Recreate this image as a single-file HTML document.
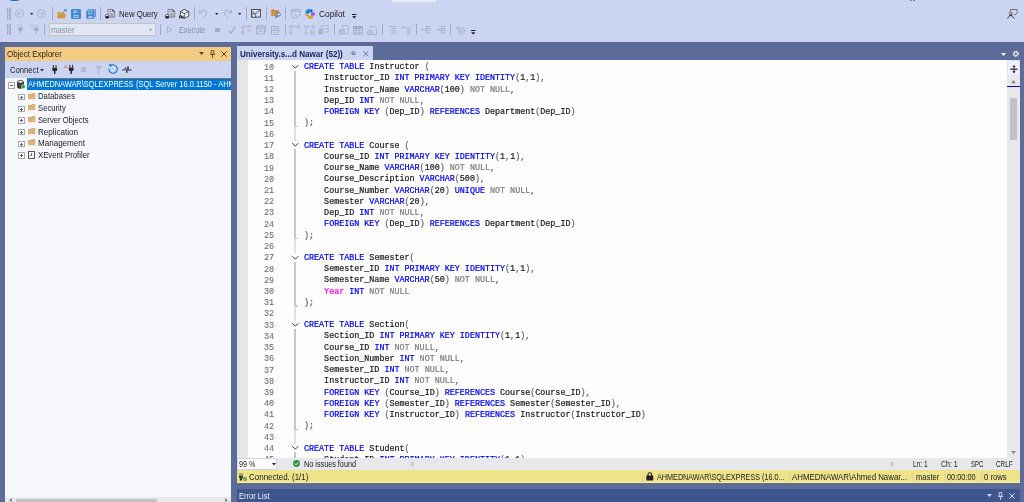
<!DOCTYPE html>
<html>
<head>
<meta charset="utf-8">
<title>SSMS</title>
<style>
*{box-sizing:border-box;margin:0;padding:0}
html,body{width:1024px;height:502px;overflow:hidden}
body{background:#5d6b99;font-family:"Liberation Sans",sans-serif;font-size:9px;color:#1e1e1e;position:relative}
#root{position:absolute;left:0;top:0;width:1024px;height:502px;will-change:transform;opacity:0.9999}
.abs{position:absolute}
#topbar{left:0;top:0;width:1024px;height:42px;background:#ccd5f0}
svg{position:absolute;overflow:visible}
/* object explorer */
#oe{left:5px;top:47px;width:226.4px;height:455px;background:#f7f9fe}
.plus{position:absolute;width:6.6px;height:6.6px;border:0.8px solid #a9a9a9;background:#fff}
.plus:before{content:"";position:absolute;left:1px;top:2.1px;width:3px;height:0.8px;background:#5a6275}
.plus.p:after{content:"";position:absolute;left:2.1px;top:1px;width:0.8px;height:3px;background:#5a6275}
/* editor */
#tab{left:236.7px;top:46.4px;width:136.7px;height:13.7px;background:#ccd5f0}
#ed{left:237px;top:60px;width:783px;height:398px;background:#fff;overflow:hidden}
#margin{left:0;top:0;width:10.8px;height:398px;background:#e6e7e8}
.ln,.code{position:absolute;font-family:"Liberation Mono",monospace;font-size:8.4px;line-height:11.2px;white-space:pre}
.ln{color:#737373;-webkit-text-stroke:0.12px;margin-top:0.4px;left:0;width:37px;text-align:right}
.code{left:67px;color:#1e1e1e;-webkit-text-stroke:0.22px}
.k{color:#0000ff}.g{color:#808080}.p{color:#6a6a6a}.m{color:#ff00ff}
#edbot{left:237px;top:458px;width:783px;height:12px;background:#e8e8ec}
#status{left:237px;top:470px;width:783px;height:13.2px;background:#f0e489;border-bottom:1px solid #faf093}
#err{left:237px;top:489px;width:783px;height:13px;background:#40568d}
.t{position:absolute;white-space:pre;line-height:12px;transform-origin:0 0}
</style>
</head>
<body>
<div id="root">
<div id="topbar" class="abs"></div>
<div class="abs" style="left:9.8px;top:0;width:9px;height:1.2px;background:linear-gradient(90deg,#2f8fe6,#0a62d6 50%,#2f8fe6);border-radius:0 0 2px 2px"></div><div class="abs" style="left:9.8px;top:1.2px;width:9px;height:0.8px;background:#dbe3f7"></div>
<div class="abs" style="left:392px;top:0;width:44.4px;height:2.3px;background:#e9edfb"></div>
<div class="abs" style="left:909.8px;top:0;width:2px;height:0.9px;background:#7c8296"></div><div class="abs" style="left:913.2px;top:0;width:2px;height:0.9px;background:#7c8296"></div>
<div class="abs" style="left:6.9px;top:7.7px;width:4.4px;height:12.1px;background-image:radial-gradient(circle at 0.7px 0.7px,#8f9cc2 0.6px,transparent 0.9px),radial-gradient(circle at 2.2px 2px,#8f9cc2 0.6px,transparent 0.9px);background-size:3px 2.6px"></div>
<svg style="left:15.2px;top:8.6px" width="9" height="9"><circle cx="4.5" cy="4.5" r="4" fill="none" stroke="#a4acc6" stroke-width="0.8"/><path d="M6.6 4.5H2.6M4.3 2.7L2.5 4.5L4.3 6.3" fill="none" stroke="#a4acc6" stroke-width="0.8"/></svg>
<svg style="left:29.6px;top:12.5px" width="3.4" height="2.2"><path d="M0 0H3.4L1.70 2Z" fill="#2b2b2b"/></svg>
<svg style="left:37.2px;top:8.6px" width="9" height="9"><circle cx="4.5" cy="4.5" r="4" fill="none" stroke="#a4acc6" stroke-width="0.8"/><path d="M2.4 4.5H6.4M4.7 2.7L6.5 4.5L4.7 6.3" fill="none" stroke="#a4acc6" stroke-width="0.8"/></svg>
<div class="abs" style="left:52.0px;top:7.3px;width:1px;height:12.3px;background:#9dabd2"></div>
<svg style="left:57px;top:8.6px" width="10" height="10"><path d="M0.3 3H3.2L4 4H7.6V9.3H0.3Z" fill="#d8a24a"/><path d="M1.6 5.6H9.4L7.6 9.3H0.3Z" fill="#cf9738"/><path d="M5.5 4L8.6 0.9" stroke="#2e6fc2" stroke-width="1"/><path d="M7 0.3H9.4V2.7Z" fill="#2e6fc2"/></svg>
<svg style="left:71.2px;top:8.8px" width="10" height="10"><rect x="0" y="0" width="10" height="10" rx="1.3" fill="#3f87cd"/><rect x="2.3" y="1" width="5" height="3.3" fill="#8fbbe6"/><rect x="5.6" y="1.3" width="1.2" height="2.4" fill="#3f87cd"/><rect x="2.4" y="6" width="5.2" height="3" fill="#9fc6ea"/><rect x="3" y="7.2" width="4" height="0.8" fill="#3f87cd"/></svg>
<svg style="left:85.9px;top:8.8px" width="10" height="10"><rect x="1.6" y="0" width="8.4" height="8.4" rx="1.2" fill="#5b9bd8"/><rect x="0" y="1.4" width="8.6" height="8.6" rx="1.2" fill="#3f87cd" stroke="#ccd5f0" stroke-width="0.5"/><rect x="2.2" y="2.3" width="4.2" height="3" fill="#9fc6ea"/><rect x="3.3" y="2.3" width="2" height="2.1" fill="#3f87cd"/><rect x="2.2" y="6.8" width="4.4" height="2.4" fill="#9fc6ea"/></svg>
<div class="abs" style="left:100.0px;top:7.3px;width:1px;height:12.3px;background:#9dabd2"></div>
<svg style="left:105.4px;top:8.9px" width="10" height="10"><path d="M3 0.4H7.6L9.7 2.5V8.1H3Z" fill="#d9dce6" stroke="#6c6c6c" stroke-width="0.8"/><path d="M7.3 0.2L9.9 2.8L7.6 2.6Z" fill="#1e1e1e"/><path d="M4.6 2.4H6.4" stroke="#5a5f6e" stroke-width="0.7"/><rect x="4.4" y="3.6" width="4.4" height="3.8" fill="#b4b8c4"/><path d="M4.4 7.2H8.8" stroke="#7a7e8a" stroke-width="0.7"/><rect x="6.3" y="4.6" width="1" height="0.9" fill="#3b6fd0"/><path d="M0.3 6.6V8.6C0.3 9.9 3.9 9.9 3.9 8.6V6.6Z" fill="#161616"/><ellipse cx="2.1" cy="6.4" rx="1.8" ry="0.95" fill="#f6f6f6" stroke="#161616" stroke-width="0.5"/></svg>
<div class="t" style="left:119.00px;top:7.78px;font-size:9px;color:#1e1e1e;transform:scaleX(0.8608);">New Query</div>
<svg style="left:164.9px;top:8.9px" width="10" height="10"><path d="M3 0.4H7.6L9.7 2.5V8.1H3Z" fill="#d9dce6" stroke="#6c6c6c" stroke-width="0.8"/><path d="M7.3 0.2L9.9 2.8L7.6 2.6Z" fill="#1e1e1e"/><path d="M4.6 2.4H6.4" stroke="#5a5f6e" stroke-width="0.7"/><rect x="4.4" y="3.6" width="4.4" height="3.8" fill="#b4b8c4"/><path d="M4.4 7.2H8.8" stroke="#7a7e8a" stroke-width="0.7"/><rect x="6.3" y="4.6" width="1" height="0.9" fill="#3b6fd0"/><path d="M0.3 6.6V8.6C0.3 9.9 3.9 9.9 3.9 8.6V6.6Z" fill="#161616"/><ellipse cx="2.1" cy="6.4" rx="1.8" ry="0.95" fill="#f6f6f6" stroke="#161616" stroke-width="0.5"/></svg>
<svg style="left:178.9px;top:8.7px" width="10.2" height="9.6"><path d="M5.4 0.4L9.8 2.6V7.2L5.4 9.3L1.4 7.4V2.6Z" fill="#eef1fa" stroke="#2a2a2a" stroke-width="0.8"/><path d="M1.4 2.6L5.4 4.6L9.8 2.6M5.4 4.6V9.3" fill="none" stroke="#2a2a2a" stroke-width="0.7"/><path d="M0.7 6.6V9.4M2.3 6.6V9.4M3.9 6.6V9.4" stroke="#1c1c1c" stroke-width="1"/></svg>
<div class="abs" style="left:194.0px;top:7.3px;width:1px;height:12.3px;background:#9dabd2"></div>
<svg style="left:199.4px;top:8.8px" width="9" height="9"><path d="M0.6 0.8V3.8H3.8" fill="none" stroke="#a4acc6" stroke-width="0.9"/><path d="M0.8 3.6Q3.6 0.2 6.6 1.4Q9.2 3.2 6.8 6L3.8 8.8" fill="none" stroke="#a4acc6" stroke-width="0.9"/></svg>
<svg style="left:214.8px;top:12.5px" width="3.4" height="2.2"><path d="M0 0H3.4L1.70 2Z" fill="#2b2b2b"/></svg>
<svg style="left:222.6px;top:8.8px" width="9" height="9"><path d="M8.4 0.8V3.8H5.2" fill="none" stroke="#a4acc6" stroke-width="0.9"/><path d="M8.2 3.6Q5.4 0.2 2.4 1.4Q-0.2 3.2 2.2 6L5.2 8.8" fill="none" stroke="#a4acc6" stroke-width="0.9"/></svg>
<svg style="left:238.2px;top:12.5px" width="3.4" height="2.2"><path d="M0 0H3.4L1.70 2Z" fill="#2b2b2b"/></svg>
<div class="abs" style="left:246.0px;top:7.3px;width:1px;height:12.3px;background:#9dabd2"></div>
<svg style="left:251.2px;top:9.1px" width="10" height="9.6"><rect x="0.5" y="0.5" width="9" height="7.6" fill="#d6dcf2" stroke="#46423e" stroke-width="0.9"/><path d="M1 2.6L4.4 4.8L9.2 1" fill="none" stroke="#46423e" stroke-width="0.8"/><circle cx="2.8" cy="6.6" r="2" fill="#d6dcf2" stroke="#46423e" stroke-width="0.8"/></svg>
<div class="abs" style="left:266.0px;top:7.3px;width:1px;height:12.3px;background:#9dabd2"></div>
<svg style="left:271px;top:9.4px" width="10.4" height="9.4"><path d="M0.2 0.3H3L3.8 1.2H7.8V7.2H0.2Z" fill="#c9973e"/><path d="M0.2 1.9H7.8" stroke="#a87a28" stroke-width="0.6"/><circle cx="7.6" cy="5.4" r="1.7" fill="#e8effa" stroke="#2a6ec2" stroke-width="1"/><path d="M6.3 6.8L4.6 8.8" stroke="#2a6ec2" stroke-width="1.1"/></svg>
<div class="abs" style="left:285.0px;top:7.3px;width:1px;height:12.3px;background:#9dabd2"></div>
<svg style="left:290.6px;top:9.3px" width="9.6" height="9.4"><path d="M0.5 6.5V0.5H9.1V6.8H7.2" fill="none" stroke="#a4acc6" stroke-width="0.9"/><path d="M0.5 2.4H9.1" stroke="#a4acc6" stroke-width="0.8"/><path d="M1.6 7.2L3.8 5.2L6 7.2V9H1.6Z" fill="none" stroke="#a4acc6" stroke-width="0.8"/></svg>
<svg style="left:304.8px;top:8.8px" width="10.2" height="10"><path d="M0.6 4.2Q0.4 0.4 3.4 0.3H5.6Q7.4 0.4 7.6 2.2L7.2 3.8H4.4L3.6 4.4H0.6Z" fill="#1f80d9"/><circle cx="6.7" cy="1.6" r="0.8" fill="#1030c0"/><path d="M0.5 4.2H4L3.8 5H0.4Z" fill="#4aa86a"/><path d="M0.4 4.9H3.9L3.5 7.2Q2.6 7.6 1.4 7.2Q0.2 6.6 0.4 4.9Z" fill="#d9a63c"/><path d="M2.6 7.2L3.4 6.2H8.6L8.2 8.2Q7.6 9.9 5.8 9.9H4.4Q2.8 9.7 2.6 7.2Z" fill="#dca233"/><path d="M6 3.4H9Q10.2 3.6 10 5L9.6 6.4H6.6L5.6 5.4Z" fill="#8b5cf0"/><circle cx="7.6" cy="5.8" r="0.9" fill="#f044e0"/><path d="M4.6 4L6 3.6L5.4 6L4.2 6.4Z" fill="#eef4ff"/></svg>
<div class="t" style="left:318.60px;top:7.78px;font-size:9px;color:#1e1e1e;transform:scaleX(0.9245);">Copilot</div>
<svg style="left:352.4px;top:14.2px" width="4.4" height="4.8"><path d="M0 0.5H4.4" stroke="#1e1e1e" stroke-width="1"/><path d="M0 2.3H4.4L2.2 4.6Z" fill="#1e1e1e"/></svg>
<svg style="left:1006.6px;top:9px" width="10.8" height="10"><path d="M3.2 2.6V0.5H10.2V3.8L8.6 5.6H7" fill="none" stroke="#6a6a6a" stroke-width="0.9"/><circle cx="3.8" cy="4.4" r="1.4" fill="#eef1fa" stroke="#3a3a3a" stroke-width="0.8"/><path d="M0.4 9.6L3.8 5.6L7.2 9.6" fill="none" stroke="#2e2e2e" stroke-width="0.9"/><path d="M2.6 6.2H5" stroke="#1e1e1e" stroke-width="1"/></svg>
<div class="abs" style="left:6.9px;top:23.9px;width:4.4px;height:10.9px;background-image:radial-gradient(circle at 0.7px 0.7px,#8f9cc2 0.6px,transparent 0.9px),radial-gradient(circle at 2.2px 2px,#8f9cc2 0.6px,transparent 0.9px);background-size:3px 2.6px"></div>
<svg style="left:17.5px;top:25.3px" width="4.8" height="8.8" viewBox="0 0 5.2 9"><path d="M1.3 0V2.8M3.9 0V2.8" stroke="#a4acc6" stroke-width="0.8"/><path d="M0.1 2.8H5.1V4.6Q5.1 6 3.1 6V9H2.1V6Q0.1 6 0.1 4.6Z" fill="#a4acc6"/></svg>
<svg style="left:29.8px;top:25.1px" width="8.6" height="9" viewBox="0 0 9 9.4"><path d="M0.4 0.4L3 2.6M3 0.4L0.4 2.6" stroke="#a4acc6" stroke-width="0.7"/><path d="M5.1 0.6V3.2M7.7 0.6V3.2" stroke="#a4acc6" stroke-width="0.9"/><path d="M3.9 3.2H8.9V5Q8.9 6.4 6.9 6.4V9.4H5.9V6.4Q3.9 6.4 3.9 5Z" fill="#a4acc6"/></svg>
<div class="abs" style="left:44.0px;top:24.0px;width:1px;height:11.3px;background:#9dabd2"></div>
<div class="abs" style="left:49px;top:23px;width:107px;height:13.3px;background:#e1e7f6;border:1px solid #c9c5bd"></div>
<div class="t" style="left:51.00px;top:23.63px;font-size:9px;color:#8b91a6;transform:scaleX(0.8577);">master</div>
<svg style="left:149.4px;top:29.4px" width="3.0" height="2.2"><path d="M0 0H3.0L1.50 2Z" fill="#8b91a6"/></svg>
<div class="abs" style="left:160.0px;top:24.0px;width:1px;height:11.3px;background:#9dabd2"></div>
<svg style="left:167.2px;top:26.4px" width="5.4" height="7.2"><path d="M0.5 0.6L4.8 3.6L0.5 6.6Z" fill="none" stroke="#a4acc6" stroke-width="0.8"/></svg>
<div class="t" style="left:179.00px;top:23.63px;font-size:9px;color:#8b91a6;transform:scaleX(0.8115);">Execute</div>
<div class="abs" style="left:215.3px;top:27.5px;width:4.6px;height:4.6px;background:#a4acc6"></div>
<svg style="left:228px;top:25.8px" width="8" height="8"><path d="M0.5 4.6L2.8 7.4L7.4 0.5" fill="none" stroke="#a4acc6" stroke-width="1.1"/></svg>
<svg style="left:240.8px;top:25.2px" width="10.4" height="9.6"><rect x="0.6" y="0.5" width="2.6" height="2.4" rx="0.7" fill="none" stroke="#a4acc6" stroke-width="0.7"/><rect x="7" y="0.5" width="2.6" height="2.4" rx="0.7" fill="none" stroke="#a4acc6" stroke-width="0.7"/><path d="M3.2 1.7H7M1.9 2.9V6.4" stroke="#a4acc6" stroke-width="0.7"/><circle cx="1.9" cy="7.8" r="1.3" fill="none" stroke="#a4acc6" stroke-width="0.7"/><path d="M6.4 5L8.2 6.8L10 5Z" fill="none" stroke="#a4acc6" stroke-width="0.6"/></svg>
<svg style="left:255.6px;top:25.3px" width="10" height="9.4"><path d="M1.8 1.8V0.5H9.5V6.8H8.3" fill="none" stroke="#a4acc6" stroke-width="0.8"/><rect x="0.5" y="2" width="7.8" height="6.8" fill="none" stroke="#a4acc6" stroke-width="0.8"/><path d="M0.5 3.8H8.3M2 6.2H6.8" stroke="#a4acc6" stroke-width="0.8"/></svg>
<svg style="left:271px;top:25.6px" width="7.8" height="9"><rect x="0.5" y="0.5" width="6.8" height="8" fill="none" stroke="#a4acc6" stroke-width="0.8"/><path d="M0.5 4.3H7.3M2.6 2.4H5.2M2.6 6.4H5.2" stroke="#a4acc6" stroke-width="0.8"/></svg>
<div class="abs" style="left:285.0px;top:24.0px;width:1px;height:11.3px;background:#9dabd2"></div>
<svg style="left:289.3px;top:24.8px" width="11.4" height="10"><rect x="0.6" y="0.5" width="2.4" height="2.2" rx="0.6" fill="none" stroke="#a4acc6" stroke-width="0.7"/><rect x="8.2" y="0.5" width="2.4" height="2.2" rx="0.6" fill="none" stroke="#a4acc6" stroke-width="0.7"/><path d="M3.6 1.6H7.6M5 0.6L4 1.6L5 2.6M1.8 3.4V6.6" stroke="#a4acc6" stroke-width="0.6" fill="none"/><circle cx="1.8" cy="8.2" r="1.3" fill="none" stroke="#a4acc6" stroke-width="0.7"/></svg>
<svg style="left:303.6px;top:24.8px" width="11.4" height="10"><rect x="0.6" y="0.5" width="2.4" height="2.2" rx="0.6" fill="none" stroke="#a4acc6" stroke-width="0.7"/><rect x="8.2" y="0.5" width="2.4" height="2.2" rx="0.6" fill="none" stroke="#a4acc6" stroke-width="0.7"/><path d="M3.6 1.6H7.6M5 0.6L4 1.6L5 2.6M1.8 3.4V6.6" stroke="#a4acc6" stroke-width="0.6" fill="none"/><circle cx="1.8" cy="8.2" r="1.3" fill="none" stroke="#a4acc6" stroke-width="0.7"/><circle cx="8.4" cy="7.4" r="2.2" fill="none" stroke="#a4acc6" stroke-width="0.8"/><path d="M7.3 7.5L8.1 8.4L9.6 6.6" stroke="#a4acc6" stroke-width="0.7" fill="none"/></svg>
<svg style="left:318.2px;top:25.2px" width="10.6" height="9.6"><path d="M3.4 3V0.5H10.1V7H6.4" fill="none" stroke="#a4acc6" stroke-width="0.8"/><path d="M6 2.6V4.4M8 2.6V4.4" stroke="#a4acc6" stroke-width="0.7"/><rect x="0.5" y="3.6" width="4.4" height="5.6" rx="0.8" fill="#a4acc6"/><path d="M1.9 4.6V8.4M3.4 4.6V8.4" stroke="#ccd5f0" stroke-width="0.5"/></svg>
<div class="abs" style="left:334.0px;top:24.0px;width:1px;height:11.3px;background:#9dabd2"></div>
<svg style="left:338.6px;top:25.4px" width="9.6" height="9.4"><path d="M3.6 3.4V0.5H9.1V8.9H5.6" fill="none" stroke="#a4acc6" stroke-width="0.8"/><rect x="0.5" y="4.4" width="4.6" height="4.5" fill="none" stroke="#a4acc6" stroke-width="0.8"/><path d="M0.5 6.6H5.1M2.8 4.4V8.9" stroke="#a4acc6" stroke-width="0.6"/></svg>
<svg style="left:353px;top:25.8px" width="9.8" height="8.8"><rect x="0.4" y="0.4" width="9" height="8" fill="none" stroke="#a4acc6" stroke-width="0.8"/><path d="M0.4 2.6H9.4M0.4 4.6H9.4M0.4 6.6H9.4M3.4 0.4V8.4M6.4 0.4V8.4" stroke="#a4acc6" stroke-width="0.7"/><rect x="0.4" y="0.4" width="9" height="2.2" fill="#a4acc6"/></svg>
<svg style="left:367.4px;top:25.6px" width="10.2" height="9"><path d="M3.4 3.6V0.5H7.4L9.7 2.8V8.5H5.4" fill="none" stroke="#a4acc6" stroke-width="0.8"/><rect x="0.5" y="4.6" width="4.6" height="4" rx="0.6" fill="none" stroke="#a4acc6" stroke-width="0.8"/><path d="M0.5 6.6H5.1M2.8 4.6V8.6" stroke="#a4acc6" stroke-width="0.6"/></svg>
<div class="abs" style="left:382.0px;top:24.0px;width:1px;height:11.3px;background:#9dabd2"></div>
<svg style="left:387.6px;top:26.2px" width="8.6" height="8"><path d="M0.4 0.5H8.4M3 2.7H8.4M3 4.9H8.4M3 7.1H8.4" stroke="#a4acc6" stroke-width="0.8"/></svg>
<svg style="left:401px;top:25.2px" width="10" height="9.2"><path d="M0.6 0.6V3H3M0.8 2.8Q2.4 0.4 4.6 2.2" fill="none" stroke="#a4acc6" stroke-width="0.7"/><path d="M4 3H9.8M6 5H9.8M6 7H9.8M6 9H9.8" stroke="#a4acc6" stroke-width="0.8"/></svg>
<div class="abs" style="left:416.0px;top:24.0px;width:1px;height:11.3px;background:#9dabd2"></div>
<svg style="left:421.2px;top:26.4px" width="10" height="7.4"><path d="M0.3 3.6H4M1.8 2L0.3 3.6L1.8 5.2" fill="none" stroke="#a4acc6" stroke-width="0.7"/><path d="M5.2 0.5H9.8M5.2 2.6H9.8M5.2 4.7H9.8M5.2 6.8H9.8M5.4 0.5V6.8" stroke="#a4acc6" stroke-width="0.8"/></svg>
<svg style="left:436px;top:26.4px" width="10" height="7.4"><path d="M0.3 3.6H4M2.5 2L4 3.6L2.5 5.2" fill="none" stroke="#a4acc6" stroke-width="0.7"/><path d="M5.2 0.5H9.8M5.2 2.6H9.8M5.2 4.7H9.8M5.2 6.8H9.8M5.4 0.5V6.8" stroke="#a4acc6" stroke-width="0.8"/></svg>
<div class="abs" style="left:450.0px;top:24.0px;width:1px;height:11.3px;background:#9dabd2"></div>
<svg style="left:455.2px;top:25.8px" width="10" height="8.6"><path d="M0.3 2H3.4M2 0.6L3.5 2L2 3.4" fill="none" stroke="#a4acc6" stroke-width="0.7"/><circle cx="6.4" cy="5" r="3.2" fill="none" stroke="#a4acc6" stroke-width="0.8"/><circle cx="6.4" cy="5" r="1.3" fill="none" stroke="#a4acc6" stroke-width="0.7"/></svg>
<svg style="left:471px;top:30.4px" width="4.4" height="4.8"><path d="M0 0.5H4.4" stroke="#1e1e1e" stroke-width="1"/><path d="M0 2.3H4.4L2.2 4.6Z" fill="#1e1e1e"/></svg>
<div id="oe" class="abs"></div>
<div class="abs" style="left:5px;top:47px;width:226.4px;height:14px;background:#f5cc84"></div>
<div class="t" style="left:7.20px;top:48.28px;font-size:9px;color:#2a2410;transform:scaleX(0.8834);">Object Explorer</div>
<svg style="left:199px;top:52px" width="5" height="3"><path d="M0 0H5L2.5 3Z" fill="#5a4618"/></svg>
<svg style="left:209.5px;top:50px" width="5" height="8"><path d="M1.2 0.5H3.8V4.2H1.2ZM0 4.5H5M2.5 4.5V8" fill="none" stroke="#6b5418" stroke-width="0.9"/></svg>
<svg style="left:220.5px;top:51px" width="6" height="6"><path d="M0.3 0.3L5.7 5.7M5.7 0.3L0.3 5.7" fill="none" stroke="#5a4618" stroke-width="1"/></svg>
<div class="abs" style="left:5px;top:61px;width:226.4px;height:17.3px;background:#ccd5f0"></div>
<div class="t" style="left:9.60px;top:64.28px;font-size:9px;color:#1e1e1e;transform:scaleX(0.8529);">Connect</div>
<svg style="left:40.4px;top:69.2px" width="4" height="3"><path d="M0 0H4L2 2.5Z" fill="#3b3b3b"/></svg>
<svg style="left:52.3px;top:64.7px" width="5.4" height="9" viewBox="0 0 6 10"><path d="M1.5 0V3M4.5 0V3" stroke="#2b2b2b" stroke-width="1.1" fill="none"/><path d="M0.3 3H5.7V5.5Q5.7 7 3.8 7V10H2.2V7Q0.3 7 0.3 5.5Z" fill="#2b2b2b"/></svg>
<svg style="left:64.2px;top:63.8px" width="9.9" height="9.9" viewBox="0 0 11 11"><path d="M0.3 1.4L3.6 4.8M3.6 1.4L0.3 4.8" stroke="#c87428" stroke-width="0.9" fill="none"/><path d="M6.5 1V4M9.5 1V4" stroke="#2b2b2b" stroke-width="1.1" fill="none"/><path d="M5.3 4H10.7V6.5Q10.7 8 8.8 8V11H7.2V8Q5.3 8 5.3 6.5Z" fill="#2b2b2b"/></svg>
<div class="abs" style="left:81.1px;top:66.7px;width:5.2px;height:5.2px;background:#b4bad0"></div>
<svg style="left:94.6px;top:65.8px" width="7.4" height="8"><path d="M0 0H7.4L4.5 3.6V8L2.9 7.2V3.6Z" fill="#b4bad0"/></svg>
<svg style="left:107.6px;top:64.4px" width="10.4" height="10"><path d="M2.4 1.8A4.2 4.2 0 1 1 0.9 4.6" fill="none" stroke="#1a6fc0" stroke-width="1.05"/><path d="M0.6 0.6L3.6 0.3L2.9 3.2Z" fill="#1a6fc0"/></svg>
<svg style="left:122.3px;top:65.8px" width="10" height="8"><path d="M0 4H2.6L3.6 1.6L4.8 6.8L6 0.6L7 4.8L7.6 4H9.8" fill="none" stroke="#2b2b2b" stroke-width="0.9"/></svg>
<div class="abs" style="left:27.2px;top:78.1px;width:204.2px;height:11.6px;background:#0078d7;border-top:0.8px solid #7a7468"></div>
<div class="abs" style="left:27px;top:76px;width:204.4px;height:16px;overflow:hidden"><div class="t" style="left:1.00px;top:2.38px;font-size:9px;color:#fff;transform:scaleX(0.8222);">AHMEDNAWAR\SQLEXPRESS </div><div class="t" style="left:108.60px;top:2.38px;font-size:9px;color:#fff;transform:scaleX(0.8301);">(SQL Server 16.0.1150 - AHMEDNAWAR</div></div>
<div class="plus" style="left:8px;top:82px"></div>
<svg style="left:17px;top:80px" width="9" height="9"><path d="M0.5 1.8V7.2C0.5 8.6 6.5 8.6 6.5 7.2V1.8" fill="#3a3a3a" stroke="#2a2a2a" stroke-width="0.8"/><ellipse cx="3.5" cy="1.8" rx="3" ry="1.4" fill="#f4f4f4" stroke="#2a2a2a" stroke-width="0.8"/><circle cx="6.3" cy="6.6" r="2" fill="#2f9a3c" stroke="#fff" stroke-width="0.5"/></svg>
<div class="t" style="left:38.00px;top:90.48px;font-size:9px;color:#1e1e1e;transform:scaleX(0.8598);">Databases</div>
<div class="plus p" style="left:18px;top:93.8px"></div>
<svg style="left:27.5px;top:92.6px" width="8" height="7"><path d="M0 1H3L3.8 0H7.3V6.3H0Z" fill="#dcb67a"/><path d="M0 2.2H7.3" stroke="#c9a15f" stroke-width="0.5"/></svg>
<div class="t" style="left:38.00px;top:102.16px;font-size:9px;color:#1e1e1e;transform:scaleX(0.8550);">Security</div>
<div class="plus p" style="left:18px;top:105.5px"></div>
<svg style="left:27.5px;top:104.3px" width="8" height="7"><path d="M0 1H3L3.8 0H7.3V6.3H0Z" fill="#dcb67a"/><path d="M0 2.2H7.3" stroke="#c9a15f" stroke-width="0.5"/></svg>
<div class="t" style="left:38.00px;top:113.84px;font-size:9px;color:#1e1e1e;transform:scaleX(0.8500);">Server Objects</div>
<div class="plus p" style="left:18px;top:117.2px"></div>
<svg style="left:27.5px;top:116.0px" width="8" height="7"><path d="M0 1H3L3.8 0H7.3V6.3H0Z" fill="#dcb67a"/><path d="M0 2.2H7.3" stroke="#c9a15f" stroke-width="0.5"/></svg>
<div class="t" style="left:38.00px;top:125.52px;font-size:9px;color:#1e1e1e;transform:scaleX(0.8982);">Replication</div>
<div class="plus p" style="left:18px;top:128.8px"></div>
<svg style="left:27.5px;top:127.6px" width="8" height="7"><path d="M0 1H3L3.8 0H7.3V6.3H0Z" fill="#dcb67a"/><path d="M0 2.2H7.3" stroke="#c9a15f" stroke-width="0.5"/></svg>
<div class="t" style="left:38.00px;top:137.20px;font-size:9px;color:#1e1e1e;transform:scaleX(0.8944);">Management</div>
<div class="plus p" style="left:18px;top:140.5px"></div>
<svg style="left:27.5px;top:139.3px" width="8" height="7"><path d="M0 1H3L3.8 0H7.3V6.3H0Z" fill="#dcb67a"/><path d="M0 2.2H7.3" stroke="#c9a15f" stroke-width="0.5"/></svg>
<div class="t" style="left:38.00px;top:148.88px;font-size:9px;color:#1e1e1e;transform:scaleX(0.8579);">XEvent Profiler</div>
<div class="plus p" style="left:18px;top:152.2px"></div>
<svg style="left:28px;top:150.7px" width="7" height="8"><rect x="0.5" y="0.5" width="6" height="7" fill="#fff" stroke="#444" stroke-width="0.9"/><path d="M3.5 2V4.5H2" stroke="#444" stroke-width="0.8" fill="none"/></svg>
<div class="abs" style="left:5px;top:496.5px;width:226.4px;height:6px;background:#e8e8ec"></div>
<div class="abs" style="left:15.6px;top:498.6px;width:141.4px;height:4px;background:#c2c3c9"></div>
<svg style="left:9px;top:498px" width="3" height="4"><path d="M3 0V4L0 2.5Z" fill="#86868c"/></svg>
<svg style="left:225px;top:498px" width="3" height="4"><path d="M0 0V4L3 2.5Z" fill="#86868c"/></svg>
<div id="tab" class="abs"></div>
<div class="t" style="left:239.80px;top:47.68px;font-size:9px;color:#1a2860;font-weight:bold;transform:scaleX(0.8988);">University.s...d Nawar (52))</div>
<svg style="left:350.4px;top:51.3px" width="5.6" height="4.2"><path d="M0 2.1H2.4M2.5 0.2V4M2.8 0.7H5.2V3.2H2.8" fill="none" stroke="#6c7cab" stroke-width="0.8"/><path d="M2.8 3.2H5.2" stroke="#6c7cab" stroke-width="1.1"/></svg>
<svg style="left:363.1px;top:51.1px" width="5.6" height="5.4"><path d="M0.2 0.2L5.4 5.2M5.4 0.2L0.2 5.2" fill="none" stroke="#5a6a9a" stroke-width="0.9"/></svg>
<svg style="left:1000.8px;top:52.7px" width="5" height="3"><path d="M0 0H5L2.5 3Z" fill="#fff"/></svg>
<svg style="left:1011.6px;top:49.6px" width="7.6" height="7.6" viewBox="0 0 8 8"><circle cx="4" cy="4" r="2.6" fill="none" stroke="#fff" stroke-width="1.5" stroke-dasharray="1.1 0.95"/><circle cx="4" cy="4" r="1.8" fill="none" stroke="#fff" stroke-width="0.9"/></svg>
<div id="ed" class="abs">
  <div id="margin" class="abs"></div>
<div class="ln" style="top:2.20px">10</div>
<div class="code" style="top:2.20px"><span class="k">CREATE</span> <span class="k">TABLE</span> Instructor <span class="p">(</span></div>
<div class="ln" style="top:13.42px">11</div>
<div class="code" style="top:13.42px">    Instructor_ID <span class="k">INT</span> <span class="k">PRIMARY</span> <span class="k">KEY</span> <span class="k">IDENTITY</span><span class="p">(</span>1<span class="p">,</span>1<span class="p">),</span></div>
<div class="ln" style="top:24.64px">12</div>
<div class="code" style="top:24.64px">    Instructor_Name <span class="k">VARCHAR</span><span class="p">(</span>100<span class="p">)</span> <span class="g">NOT</span> <span class="g">NULL</span><span class="p">,</span></div>
<div class="ln" style="top:35.86px">13</div>
<div class="code" style="top:35.86px">    Dep_ID <span class="k">INT</span> <span class="g">NOT</span> <span class="g">NULL</span><span class="p">,</span></div>
<div class="ln" style="top:47.08px">14</div>
<div class="code" style="top:47.08px">    <span class="k">FOREIGN</span> <span class="k">KEY</span> <span class="p">(</span>Dep_ID<span class="p">)</span> <span class="k">REFERENCES</span> Department<span class="p">(</span>Dep_ID<span class="p">)</span></div>
<div class="ln" style="top:58.30px">15</div>
<div class="code" style="top:58.30px"><span class="p">);</span></div>
<div class="ln" style="top:69.52px">16</div>
<div class="ln" style="top:80.74px">17</div>
<div class="code" style="top:80.74px"><span class="k">CREATE</span> <span class="k">TABLE</span> Course <span class="p">(</span></div>
<div class="ln" style="top:91.96px">18</div>
<div class="code" style="top:91.96px">    Course_ID <span class="k">INT</span> <span class="k">PRIMARY</span> <span class="k">KEY</span> <span class="k">IDENTITY</span><span class="p">(</span>1<span class="p">,</span>1<span class="p">),</span></div>
<div class="ln" style="top:103.18px">19</div>
<div class="code" style="top:103.18px">    Course_Name <span class="k">VARCHAR</span><span class="p">(</span>100<span class="p">)</span> <span class="g">NOT</span> <span class="g">NULL</span><span class="p">,</span></div>
<div class="ln" style="top:114.40px">20</div>
<div class="code" style="top:114.40px">    Course_Description <span class="k">VARCHAR</span><span class="p">(</span>500<span class="p">),</span></div>
<div class="ln" style="top:125.62px">21</div>
<div class="code" style="top:125.62px">    Course_Number <span class="k">VARCHAR</span><span class="p">(</span>20<span class="p">)</span> <span class="k">UNIQUE</span> <span class="g">NOT</span> <span class="g">NULL</span><span class="p">,</span></div>
<div class="ln" style="top:136.84px">22</div>
<div class="code" style="top:136.84px">    Semester <span class="k">VARCHAR</span><span class="p">(</span>20<span class="p">),</span></div>
<div class="ln" style="top:148.06px">23</div>
<div class="code" style="top:148.06px">    Dep_ID <span class="k">INT</span> <span class="g">NOT</span> <span class="g">NULL</span><span class="p">,</span></div>
<div class="ln" style="top:159.28px">24</div>
<div class="code" style="top:159.28px">    <span class="k">FOREIGN</span> <span class="k">KEY</span> <span class="p">(</span>Dep_ID<span class="p">)</span> <span class="k">REFERENCES</span> Department<span class="p">(</span>Dep_ID<span class="p">)</span></div>
<div class="ln" style="top:170.50px">25</div>
<div class="code" style="top:170.50px"><span class="p">);</span></div>
<div class="ln" style="top:181.72px">26</div>
<div class="ln" style="top:192.94px">27</div>
<div class="code" style="top:192.94px"><span class="k">CREATE</span> <span class="k">TABLE</span> Semester<span class="p">(</span></div>
<div class="ln" style="top:204.16px">28</div>
<div class="code" style="top:204.16px">    Semester_ID <span class="k">INT</span> <span class="k">PRIMARY</span> <span class="k">KEY</span> <span class="k">IDENTITY</span><span class="p">(</span>1<span class="p">,</span>1<span class="p">),</span></div>
<div class="ln" style="top:215.38px">29</div>
<div class="code" style="top:215.38px">    Semester_Name <span class="k">VARCHAR</span><span class="p">(</span>50<span class="p">)</span> <span class="g">NOT</span> <span class="g">NULL</span><span class="p">,</span></div>
<div class="ln" style="top:226.60px">30</div>
<div class="code" style="top:226.60px">    <span class="m">Year</span> <span class="k">INT</span> <span class="g">NOT</span> <span class="g">NULL</span></div>
<div class="ln" style="top:237.82px">31</div>
<div class="code" style="top:237.82px"><span class="p">);</span></div>
<div class="ln" style="top:249.04px">32</div>
<div class="ln" style="top:260.26px">33</div>
<div class="code" style="top:260.26px"><span class="k">CREATE</span> <span class="k">TABLE</span> Section<span class="p">(</span></div>
<div class="ln" style="top:271.48px">34</div>
<div class="code" style="top:271.48px">    Section_ID <span class="k">INT</span> <span class="k">PRIMARY</span> <span class="k">KEY</span> <span class="k">IDENTITY</span><span class="p">(</span>1<span class="p">,</span>1<span class="p">),</span></div>
<div class="ln" style="top:282.70px">35</div>
<div class="code" style="top:282.70px">    Course_ID <span class="k">INT</span> <span class="g">NOT</span> <span class="g">NULL</span><span class="p">,</span></div>
<div class="ln" style="top:293.92px">36</div>
<div class="code" style="top:293.92px">    Section_Number <span class="k">INT</span> <span class="g">NOT</span> <span class="g">NULL</span><span class="p">,</span></div>
<div class="ln" style="top:305.14px">37</div>
<div class="code" style="top:305.14px">    Semester_ID <span class="k">INT</span> <span class="g">NOT</span> <span class="g">NULL</span><span class="p">,</span></div>
<div class="ln" style="top:316.36px">38</div>
<div class="code" style="top:316.36px">    Instructor_ID <span class="k">INT</span> <span class="g">NOT</span> <span class="g">NULL</span><span class="p">,</span></div>
<div class="ln" style="top:327.58px">39</div>
<div class="code" style="top:327.58px">    <span class="k">FOREIGN</span> <span class="k">KEY</span> <span class="p">(</span>Course_ID<span class="p">)</span> <span class="k">REFERENCES</span> Course<span class="p">(</span>Course_ID<span class="p">),</span></div>
<div class="ln" style="top:338.80px">40</div>
<div class="code" style="top:338.80px">    <span class="k">FOREIGN</span> <span class="k">KEY</span> <span class="p">(</span>Semester_ID<span class="p">)</span> <span class="k">REFERENCES</span> Semester<span class="p">(</span>Semester_ID<span class="p">),</span></div>
<div class="ln" style="top:350.02px">41</div>
<div class="code" style="top:350.02px">    <span class="k">FOREIGN</span> <span class="k">KEY</span> <span class="p">(</span>Instructor_ID<span class="p">)</span> <span class="k">REFERENCES</span> Instructor<span class="p">(</span>Instructor_ID<span class="p">)</span></div>
<div class="ln" style="top:361.24px">42</div>
<div class="code" style="top:361.24px"><span class="p">);</span></div>
<div class="ln" style="top:372.46px">43</div>
<div class="ln" style="top:383.68px">44</div>
<div class="code" style="top:383.68px"><span class="k">CREATE</span> <span class="k">TABLE</span> Student<span class="p">(</span></div>
<div class="ln" style="top:394.90px">45</div>
<div class="code" style="top:394.90px">    Student_ID <span class="k">INT</span> <span class="k">PRIMARY</span> <span class="k">KEY</span> <span class="k">IDENTITY</span><span class="p">(</span>1<span class="p">,</span>1<span class="p">),</span></div>
<svg style="left:55px;top:0.90px" width="7" height="11"><path d="M0.3 4.2 L3.3 7.2 L6.3 4.2" fill="none" stroke="#3c3c3c" stroke-width="1"/></svg>
<div class="abs" style="left:57.4px;top:10.90px;width:1.5px;height:54.90px;background:#c8c8c8"></div>
<div class="abs" style="left:57.4px;top:65.80px;width:4px;height:1.2px;background:#c8c8c8"></div>
<div class="abs" style="left:57.4px;top:66.80px;width:1.5px;height:14.22px;background:#e2e2e2"></div>
<svg style="left:55px;top:79.44px" width="7" height="11"><path d="M0.3 4.2 L3.3 7.2 L6.3 4.2" fill="none" stroke="#3c3c3c" stroke-width="1"/></svg>
<div class="abs" style="left:57.4px;top:89.44px;width:1.5px;height:88.56px;background:#c8c8c8"></div>
<div class="abs" style="left:57.4px;top:178.00px;width:4px;height:1.2px;background:#c8c8c8"></div>
<div class="abs" style="left:57.4px;top:179.00px;width:1.5px;height:14.22px;background:#e2e2e2"></div>
<svg style="left:55px;top:191.64px" width="7" height="11"><path d="M0.3 4.2 L3.3 7.2 L6.3 4.2" fill="none" stroke="#3c3c3c" stroke-width="1"/></svg>
<div class="abs" style="left:57.4px;top:201.64px;width:1.5px;height:43.68px;background:#c8c8c8"></div>
<div class="abs" style="left:57.4px;top:245.32px;width:4px;height:1.2px;background:#c8c8c8"></div>
<div class="abs" style="left:57.4px;top:246.32px;width:1.5px;height:14.22px;background:#e2e2e2"></div>
<svg style="left:55px;top:258.96px" width="7" height="11"><path d="M0.3 4.2 L3.3 7.2 L6.3 4.2" fill="none" stroke="#3c3c3c" stroke-width="1"/></svg>
<div class="abs" style="left:57.4px;top:268.96px;width:1.5px;height:99.78px;background:#c8c8c8"></div>
<div class="abs" style="left:57.4px;top:368.74px;width:4px;height:1.2px;background:#c8c8c8"></div>
<div class="abs" style="left:57.4px;top:369.74px;width:1.5px;height:14.22px;background:#e2e2e2"></div>
<svg style="left:55px;top:382.38px" width="7" height="11"><path d="M0.3 4.2 L3.3 7.2 L6.3 4.2" fill="none" stroke="#3c3c3c" stroke-width="1"/></svg>
<div class="abs" style="left:57.4px;top:392.38px;width:1.5px;height:178.32px;background:#c8c8c8"></div>
<div class="abs" style="left:770.3px;top:0;width:12.7px;height:398px;background:#e8e8ec"></div>
<div class="abs" style="left:770.3px;top:0;width:12.7px;height:15.8px;background:#eff1fc;border:1px solid #dde3f7"></div>
<svg style="left:772.6px;top:4.7px" width="8" height="8.4"><path d="M4 0L5.6 2.1H2.4ZM4 8.4L5.6 6.3H2.4Z" fill="#2e2e2e"/><path d="M4 1.5V7" stroke="#2e2e2e" stroke-width="1"/><path d="M0.2 4.2H7.6" stroke="#4a4a4a" stroke-width="1.5"/></svg>
<svg style="left:774.2px;top:20.2px" width="5" height="3.2"><path d="M0 3.2H5L2.5 0Z" fill="#8a8a92"/></svg>
<div class="abs" style="left:770.3px;top:25.7px;width:12.7px;height:1.4px;background:#0808d0"></div>
<div class="abs" style="left:773.2px;top:38.3px;width:6.8px;height:42.2px;background:#c2c3c9"></div>
<svg style="left:774.2px;top:390.5px" width="5" height="3.2"><path d="M0 0H5L2.5 3.2Z" fill="#8a8a92"/></svg>
</div>
<div id="edbot" class="abs"></div>
<div class="abs" style="left:236.8px;top:458px;width:40px;height:12px;background:#fff;border:1px solid #ccd3ea"></div>
<div class="t" style="left:238.50px;top:457.68px;font-size:9px;color:#1e1e1e;transform:scaleX(0.7921);">99 %</div>
<svg style="left:271.5px;top:463px" width="4" height="3"><path d="M0 0H4L2 2.5Z" fill="#222"/></svg>
<svg style="left:293px;top:460.3px" width="7" height="7"><circle cx="3.5" cy="3.5" r="3.4" fill="#2e9440"/><path d="M1.8 3.6L3 4.9L5.3 2.3" fill="none" stroke="#fff" stroke-width="0.9"/></svg>
<div class="t" style="left:303.50px;top:457.68px;font-size:9px;color:#1e1e1e;transform:scaleX(0.8056);">No issues found</div>
<svg style="left:410px;top:461px" width="4" height="6"><path d="M3.5 0V6L0 3Z" fill="#c6c6ce"/></svg>
<svg style="left:890.5px;top:461px" width="4" height="6"><path d="M0 0V6L3.5 3Z" fill="#c6c6ce"/></svg>
<div class="t" style="left:912.90px;top:457.68px;font-size:9px;color:#1e1e1e;transform:scaleX(0.7339);">Ln: 1</div>
<div class="t" style="left:940.70px;top:457.68px;font-size:9px;color:#1e1e1e;transform:scaleX(0.7762);">Ch: 1</div>
<div class="t" style="left:970.50px;top:457.68px;font-size:9px;color:#1e1e1e;transform:scaleX(0.6697);">SPC</div>
<div class="t" style="left:996.20px;top:457.68px;font-size:9px;color:#1e1e1e;transform:scaleX(0.7102);">CRLF</div>
<div id="status" class="abs"></div>
<svg style="left:239.2px;top:473.2px" width="8.4" height="8.4"><path d="M1 0V2.4M3 0V2.4" stroke="#4a4a4a" stroke-width="0.8"/><path d="M0 2.4H4V4.6L3.2 5.4V7.4H0.8V5.4L0 4.6Z" fill="#3c3c3c"/><circle cx="6" cy="6" r="1.9" fill="#3a9a48"/><path d="M5 6L5.8 6.8L7 5.2" stroke="#fff" stroke-width="0.5" fill="none"/></svg>
<div class="t" style="left:249.30px;top:470.68px;font-size:9px;color:#1e1e1e;transform:scaleX(0.8859);">Connected. (1/1)</div>
<svg style="left:645.5px;top:472px" width="8" height="9"><path d="M2 4V2.6A1.8 1.8 0 0 1 5.6 2.6V4" fill="none" stroke="#222" stroke-width="1.1"/><rect x="0.3" y="3.6" width="7" height="5" rx="0.8" fill="#222"/></svg>
<div class="abs" style="left:642.3px;top:472px;width:1px;height:10px;background:#e3d3a4"></div>
<div class="abs" style="left:788.9px;top:472px;width:1px;height:10px;background:#e3d3a4"></div>
<div class="abs" style="left:912.1px;top:472px;width:1px;height:10px;background:#e3d3a4"></div>
<div class="abs" style="left:943.8px;top:472px;width:1px;height:10px;background:#e3d3a4"></div>
<div class="abs" style="left:980.5px;top:472px;width:1px;height:10px;background:#e3d3a4"></div>
<div class="t" style="left:656.90px;top:470.68px;font-size:9px;color:#1e1e1e;transform:scaleX(0.8031);">AHMEDNAWAR\SQLEXPRESS (16.0...</div>
<div class="t" style="left:792.40px;top:470.68px;font-size:9px;color:#1e1e1e;transform:scaleX(0.8720);">AHMEDNAWAR\Ahmed Nawar...</div>
<div class="t" style="left:915.70px;top:470.68px;font-size:9px;color:#1e1e1e;transform:scaleX(0.8468);">master</div>
<div class="t" style="left:947.10px;top:470.68px;font-size:9px;color:#1e1e1e;transform:scaleX(0.8160);">00:00:00</div>
<div class="t" style="left:984.00px;top:470.68px;font-size:9px;color:#1e1e1e;transform:scaleX(0.8561);">0 rows</div>
<div id="err" class="abs"></div>
<div class="t" style="left:239.10px;top:489.88px;font-size:9px;color:#eef1fa;transform:scaleX(0.8353);">Error List</div>
<svg style="left:986.7px;top:494px" width="5" height="3"><path d="M0 0H5L2.5 3Z" fill="#cfd6ee"/></svg>
<svg style="left:998.3px;top:491.5px" width="5" height="8"><path d="M1.2 0.5H3.8V4.2H1.2ZM0 4.5H5M2.5 4.5V8" fill="none" stroke="#cfd6ee" stroke-width="0.9"/></svg>
<svg style="left:1008.6px;top:492.5px" width="6" height="6"><path d="M0.3 0.3L5.7 5.7M5.7 0.3L0.3 5.7" fill="none" stroke="#cfd6ee" stroke-width="1"/></svg>
</div>
</body>
</html>
